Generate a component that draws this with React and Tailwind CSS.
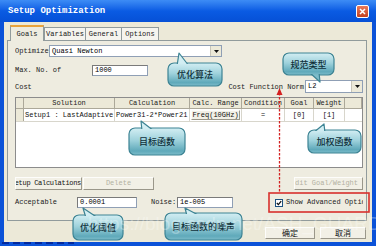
import React from 'react';

const MONO = "font-['Liberation_Mono','DejaVu_Sans_Mono',monospace]";
const CJK = "font-['Noto_Sans_CJK_SC','Noto_Sans',sans-serif]";

const callouts = [
  { id: 'algo', x: 168, y: 63, w: 54, h: 23, tip: [179, 53], base: [177, 189], side: 'top' },
  { id: 'norm', x: 283, y: 53, w: 51, h: 22, tip: [320, 82], base: [309, 319], side: 'bottom' },
  { id: 'goal', x: 129, y: 128, w: 56, h: 27, tip: [141, 121], base: [142, 154], side: 'top' },
  { id: 'weight', x: 308, y: 130, w: 53, h: 23, tip: [324, 124], base: [313, 325], side: 'top' },
  { id: 'accept', x: 73, y: 215, w: 50, h: 25, tip: [83, 208], base: [86, 98], side: 'top' },
  { id: 'noise', x: 165, y: 213, w: 77, h: 27, tip: [185, 208], base: [187, 200], side: 'top' },
];

const tailPoints = (c) => {
  const by = c.side === 'top' ? c.y + 3 : c.y + c.h - 3;
  return `${c.base[0]},${by} ${c.tip[0]},${c.tip[1]} ${c.base[1]},${by}`;
};

const Overlay = () => (
  <svg className="absolute inset-0 pointer-events-none" width="376" height="246" viewBox="0 0 376 246">
    <defs>
      {callouts.map((c) => (
        <linearGradient key={c.id} id={`g-${c.id}`} gradientUnits="userSpaceOnUse" x1="0" y1={c.y} x2="0" y2={c.y + c.h}>
          <stop offset="0" stopColor="#d3eef3" />
          <stop offset="0.45" stopColor="#9fd2dc" />
          <stop offset="0.85" stopColor="#5fa9ba" />
          <stop offset="1" stopColor="#7dbcca" />
        </linearGradient>
      ))}
    </defs>
    {callouts.map((c) => (
      <g key={c.id}>
        <rect x={c.x} y={c.y} width={c.w} height={c.h} rx="6" fill={`url(#g-${c.id})`} stroke="#3c8393" strokeWidth="1.2" />
        <polygon points={tailPoints(c)} fill={`url(#g-${c.id})`} stroke="#3c8393" strokeWidth="1.2" strokeLinejoin="round" />
        <rect x={c.x + 1} y={c.y + 1} width={c.w - 2} height={c.h - 2} rx="5" fill={`url(#g-${c.id})`} />
      </g>
    ))}
    <line x1="279.5" y1="93" x2="279.5" y2="193" stroke="#d42020" strokeWidth="1.3" strokeDasharray="2.5 1.5" />
    <polygon points="276.5,95 282.5,95 279.5,88" fill="#d42020" />
    <rect x="269" y="193" width="100" height="19" fill="none" stroke="#d8302c" strokeWidth="1.6" />
    <line x1="2" y1="243" x2="74" y2="243" stroke="#001c8a" strokeWidth="1.5" strokeDasharray="7 4" />
  </svg>
);

const Bubble = ({ className, children }) => (
  <div className={`absolute flex items-center justify-center text-[9px] font-medium text-[#10303a] leading-none ${CJK} ${className}`}>
    {children}
  </div>
);

const Combo = ({ className, value }) => (
  <div className={`flex items-center bg-white border border-[#8f9fb5] ${className}`}>
    <span className="flex-1 pl-[2px] text-[7px] text-black leading-none whitespace-nowrap overflow-hidden">{value}</span>
    <span className="w-[11px] h-full flex items-center justify-center bg-[#ece9d8] border-l border-[#c8c5b8]">
      <svg width="5" height="3" viewBox="0 0 5 3"><polygon points="0,0 5,0 2.5,3" fill="#111" /></svg>
    </span>
  </div>
);

const Field = ({ className, value }) => (
  <div className={`flex items-center bg-white border border-[#8f9fb5] border-t-[#7a7a7a] border-l-[#7a7a7a] pl-[2px] text-[7px] leading-none text-black ${className}`}>
    {value}
  </div>
);

const Button = ({ className, children, disabled }) => (
  <div
    className={`flex items-center overflow-hidden whitespace-nowrap bg-[#f2f0e6] border border-[#9a978a] border-t-[#fdfdfb] border-l-[#fdfdfb] text-[7px] leading-none ${
      disabled ? 'text-[#b3b0a2]' : 'text-[#111]'
    } ${className}`}
  >
    {children}
  </div>
);

const cols = [
  { w: 'w-[8px]', label: '' },
  { w: 'w-[91px]', label: 'Solution' },
  { w: 'w-[75px]', label: 'Calculation' },
  { w: 'w-[52px]', label: 'Calc. Range' },
  { w: 'w-[43px]', label: 'Condition' },
  { w: 'w-[29px]', label: 'Goal' },
  { w: 'w-[31px]', label: 'Weight' },
  { w: 'flex-1', label: '' },
];

const GoalTable = () => (
  <div className="mt-[4px] mr-[3px] h-[71px] bg-white border border-[#8c8c8c] flex flex-col">
    <div className="h-[11px] flex bg-[#ece9d8] border-b border-[#aca899]">
      {cols.map((c, i) => (
        <div key={i} className={`${c.w} shrink-0 flex items-center justify-center border-r border-[#aca899] text-[7px] leading-none text-[#222] whitespace-nowrap overflow-hidden`}>
          {c.label}
        </div>
      ))}
    </div>
    <div className="h-[13px] flex border-b border-[#d8d6cc] text-[7px] leading-none text-[#111]">
      <div className="w-[8px] shrink-0 bg-[#ece9d8] border-r border-[#aca899]" />
      <div className="w-[91px] shrink-0 flex items-center pl-[1px] border-r border-[#d8d6cc] whitespace-nowrap">Setup1 : LastAdaptive</div>
      <div className="w-[75px] shrink-0 flex items-center pl-[1px] border-r border-[#d8d6cc] whitespace-nowrap overflow-hidden">Power31-2*Power21</div>
      <div className="w-[52px] shrink-0 flex items-center p-[1px] border-r border-[#d8d6cc]">
        <Button className="w-full h-full justify-center">Freq(10GHz)</Button>
      </div>
      <div className="w-[43px] shrink-0 flex items-center justify-center border-r border-[#d8d6cc]">=</div>
      <div className="w-[29px] shrink-0 flex items-center justify-center border-r border-[#d8d6cc]">[0]</div>
      <div className="w-[31px] shrink-0 flex items-center justify-center border-r border-[#d8d6cc]">[1]</div>
    </div>
  </div>
);

const GoalsPanel = () => (
  <div className="h-[181px] ml-[3px] mr-[5px] border border-[#919b9c] bg-[#eeece0] flex flex-col pl-[7px] pt-[4px] text-[#1a1a1a]">
    <div className="h-[12px] flex items-center">
      <span className="w-[34px] text-[7px] leading-none whitespace-nowrap overflow-hidden">Optimizer</span>
      <Combo className="w-[173px] h-[12px]" value="Quasi Newton" />
    </div>
    <div className="mt-[8px] h-[11px] flex items-center">
      <span className="w-[77px] text-[7px] leading-none">Max. No. of</span>
      <Field className="w-[56px] h-[11px]" value="1000" />
    </div>
    <div className="mt-[4px] h-[13px] flex items-center pr-[3px]">
      <span className="text-[7px] leading-none pt-[1px]">Cost</span>
      <span className="ml-auto mr-[1px] text-[7px] leading-none pt-[1px] whitespace-nowrap">Cost Function Norm</span>
      <Combo className="w-[58px] h-[13px]" value="L2" />
    </div>
    <GoalTable />
    <div className="mt-[9px] h-[13px] flex pr-[3px]">
      <Button className="w-[67px] justify-end pr-0 tracking-[-0.3px]">Setup Calculations</Button>
      <Button className="w-[71px] ml-[1px] justify-center" disabled>Delete</Button>
      <Button className="w-[69px] ml-auto justify-end pr-[4px]" disabled>Edit Goal/Weight</Button>
    </div>
    <div className="mt-[7px] h-[11px] flex items-center pr-[3px]">
      <span className="w-[62px] text-[7px] leading-none">Acceptable</span>
      <Field className="w-[60px] h-[11px]" value="0.0001" />
      <span className="ml-[14px] w-[26px] text-[7px] leading-none">Noise:</span>
      <Field className="w-[56px] h-[11px]" value="1e-005" />
      <div className="ml-auto w-[88px] flex items-center overflow-hidden whitespace-nowrap">
        <span className="w-[8px] h-[8px] shrink-0 bg-white border border-[#1c5180] flex items-center justify-center">
          <svg width="6" height="6" viewBox="0 0 6 6"><path d="M0.8 3 L2.4 4.6 L5.2 1.2" fill="none" stroke="#111" strokeWidth="1.3" /></svg>
        </span>
        <span className="ml-[3px] text-[7px] leading-none">Show Advanced Options</span>
      </div>
    </div>
  </div>
);

const Tabs = () => (
  <div className="mt-[3px] h-[15px] flex items-end pl-[6px] text-[7px] leading-none text-[#1a1a1a]">
    <div className="w-[34px] h-[16px] -mb-[1px] z-10 flex items-center justify-center bg-[#eeece0] border border-b-0 border-[#919b9c] border-t-[#e8a33c] border-t-2">Goals</div>
    <div className="w-[42px] h-[13px] flex items-center justify-center bg-[#f5f4ee] border border-b-0 border-[#919b9c]">Variables</div>
    <div className="w-[36px] h-[13px] flex items-center justify-center bg-[#f5f4ee] border border-b-0 border-l-0 border-[#919b9c]">General</div>
    <div className="w-[37px] h-[13px] flex items-center justify-center bg-[#f5f4ee] border border-b-0 border-l-0 border-[#919b9c]">Options</div>
  </div>
);

const TitleBar = () => (
  <div className="h-[22px] shrink-0 flex items-center pl-[8px] pr-[7px] bg-gradient-to-b from-[#3d8cf5] via-[#0a5be3] to-[#0650d6]">
    <span className={`text-[9px] font-bold text-white leading-none ${MONO}`}>Setup Optimization</span>
    <div className="ml-auto w-[13px] h-[13px] rounded-[2px] border border-white bg-gradient-to-b from-[#e9795a] to-[#c4401c] flex items-center justify-center">
      <svg width="7" height="7" viewBox="0 0 7 7"><path d="M1 1 L6 6 M6 1 L1 6" stroke="#fff" strokeWidth="1.5" /></svg>
    </div>
  </div>
);

export default function App() {
  return (
    <div className={`relative w-[376px] h-[246px] overflow-hidden bg-[#0b52d8] flex flex-col ${MONO}`}>
      <TitleBar />
      <div className="flex-1 mx-[4px] mb-[4px] bg-[#ece9d8] flex flex-col">
        <Tabs />
        <GoalsPanel />
        <div className="flex-1 flex items-start justify-end pt-[6px] pr-[6px] gap-[5px]">
          <Button className={`w-[50px] h-[12px] justify-center text-[8px] ${CJK}`}>确定</Button>
          <Button className={`w-[46px] h-[12px] justify-center text-[8px] ${CJK}`}>取消</Button>
        </div>
      </div>
      <Overlay />
      <Bubble className="left-[168px] top-[63px] w-[54px] h-[23px]">优化算法</Bubble>
      <Bubble className="left-[283px] top-[53px] w-[51px] h-[22px]">规范类型</Bubble>
      <Bubble className="left-[129px] top-[128px] w-[56px] h-[27px]">目标函数</Bubble>
      <Bubble className="left-[308px] top-[130px] w-[53px] h-[23px]">加权函数</Bubble>
      <Bubble className="left-[73px] top-[215px] w-[50px] h-[25px]">优化阈值</Bubble>
      <Bubble className="left-[165px] top-[213px] w-[77px] h-[27px]">目标函数的噪声</Bubble>
      <div className="absolute left-[88px] top-[214px] text-[19px] leading-none text-white/30 font-['Liberation_Sans',sans-serif] whitespace-nowrap pointer-events-none">
        https://blog.csdn.net/ASH_GUARDIAN
      </div>
    </div>
  );
}
